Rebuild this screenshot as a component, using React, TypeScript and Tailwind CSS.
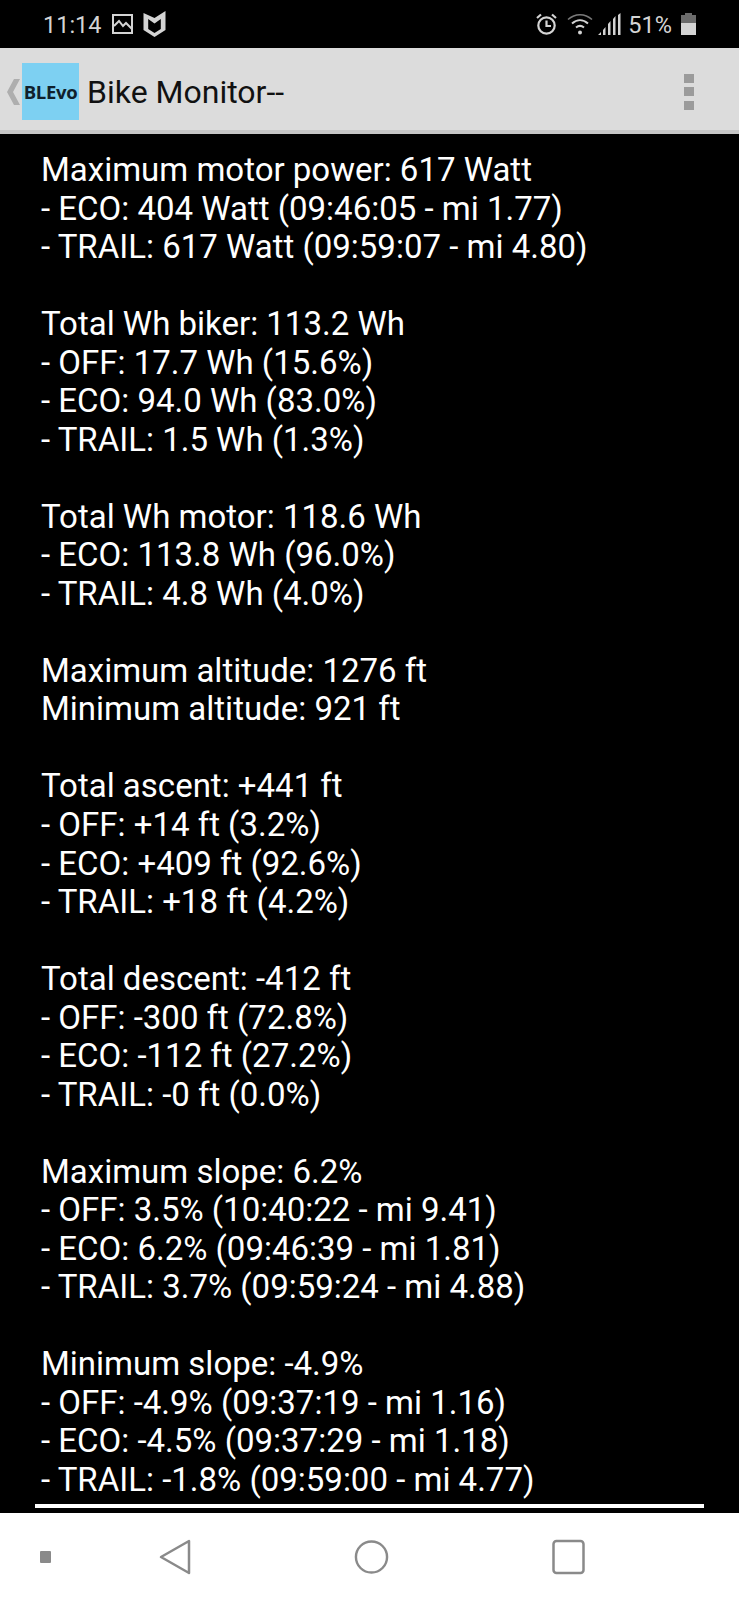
const groups = [
  ["Maximum motor power: 617 Watt", "- ECO: 404 Watt (09:46:05 - mi 1.77)", "- TRAIL: 617 Watt (09:59:07 - mi 4.80)"],
  ["Total Wh biker: 113.2 Wh", "- OFF: 17.7 Wh (15.6%)", "- ECO: 94.0 Wh (83.0%)", "- TRAIL: 1.5 Wh (1.3%)"],
  ["Total Wh motor: 118.6 Wh", "- ECO: 113.8 Wh (96.0%)", "- TRAIL: 4.8 Wh (4.0%)"],
  ["Maximum altitude: 1276 ft", "Minimum altitude: 921 ft"],
  ["Total ascent: +441 ft", "- OFF: +14 ft (3.2%)", "- ECO: +409 ft (92.6%)", "- TRAIL: +18 ft (4.2%)"],
  ["Total descent: -412 ft", "- OFF: -300 ft (72.8%)", "- ECO: -112 ft (27.2%)", "- TRAIL: -0 ft (0.0%)"],
  ["Maximum slope: 6.2%", "- OFF: 3.5% (10:40:22 - mi 9.41)", "- ECO: 6.2% (09:46:39 - mi 1.81)", "- TRAIL: 3.7% (09:59:24 - mi 4.88)"],
  ["Minimum slope: -4.9%", "- OFF: -4.9% (09:37:19 - mi 1.16)", "- ECO: -4.5% (09:37:29 - mi 1.18)", "- TRAIL: -1.8% (09:59:00 - mi 4.77)"],
];

function StatusBar() {
  return (
    <div className="h-[48px] bg-black flex items-center pl-[43px] pr-[43px] text-[#d4d4d4] text-[23.500px] shrink-0">
      <span className="mt-[3px]">11:14</span>
      <svg width="21" height="20" viewBox="0 0 21 20" className="ml-[10px]" fill="none" stroke="#d4d4d4" strokeWidth="2">
        <rect x="1" y="1" width="19" height="18" />
        <path d="M2 12l5-5 4 5 3-3 6 6" />
      </svg>
      <svg width="23" height="26" viewBox="0 0 22 26" className="ml-[10px]" fill="#d4d4d4">
        <path fillRule="evenodd" d="M0 2l11 5 11-7v19l-11 7-11-7zM4.700 8v10l6.300 4 6.300-4v-10l-6.300 4.500z" />
      </svg>
      <div className="flex-1" />
      <svg width="21" height="22" viewBox="0 0 21 22" fill="none" stroke="#d4d4d4" strokeWidth="2.200">
        <circle cx="10.500" cy="12.500" r="8.200" />
        <path d="M10.500 7.500v5.500h4.500M1 5l4-3.500M20 5l-4-3.500" />
      </svg>
      <svg width="26" height="22" viewBox="0 0 26 22" className="ml-[10px]" fill="none" stroke="#7a7a7a" strokeWidth="1.500">
        <path d="M1 6.500c7-6.500 17-6.500 24 0" />
        <path d="M5 10.500c5-4.500 11-4.500 16 0" stroke="#d4d4d4" strokeWidth="2" />
        <path d="M9 14.500c2.500-2 5.500-2 8 0" stroke="#d4d4d4" strokeWidth="2" />
        <circle cx="13" cy="19.500" r="2" fill="#d4d4d4" stroke="none" />
      </svg>
      <svg width="23" height="22" viewBox="0 0 23 22" className="ml-[5px]" fill="#d4d4d4">
        <path d="M0 22l3-3v3zM5 22v-5l2.500-3v8zM10 22v-11l2.500-3v14zM15 22v-16l2.500-3v19zM20 22v-20l2.500-2v22z" />
      </svg>
      <span className="ml-[7px] mt-[3px]">51%</span>
      <div className="ml-[9px] w-[15px] h-[22px] flex flex-col items-center">
        <div className="w-[7px] h-[2px] bg-[#6b6b6b]" />
        <div className="w-[15px] h-[8px] bg-[#6b6b6b]" />
        <div className="w-[15px] h-[12px] bg-[#d4d4d4]" />
      </div>
    </div>
  );
}

function ActionBar() {
  return (
    <div className="h-[86px] bg-[#dcdcdc] border-b-[4px] border-[#c6c6c6] pt-[5px] flex items-center shrink-0">
      <svg width="13" height="26" viewBox="0 0 13 26" className="ml-[7px]" fill="#aeaeae">
        <path d="M13 0h-6l-7 13 7 13h6l-7-13z" />
      </svg>
      <div className="ml-[2px] w-[57px] h-[57px] bg-[#7dd0f2] flex items-center justify-center text-[18.500px] font-bold text-[#10202c] font-['Open_Sans',sans-serif] tracking-[-0.3px]">
        BLEvo
      </div>
      <span className="ml-[8px] text-[32px] text-[#111]">Bike Monitor--</span>
      <div className="flex-1" />
      <div className="mr-[45px] flex flex-col gap-[4.500px]">
        <div className="w-[10px] h-[9px] bg-[#9b9b9b]" />
        <div className="w-[10px] h-[9px] bg-[#9b9b9b]" />
        <div className="w-[10px] h-[9px] bg-[#9b9b9b]" />
      </div>
    </div>
  );
}

function NavBar() {
  return (
    <div className="flex-1 bg-white flex items-center pl-[40px]">
      <div className="w-[11px] h-[12px] rounded-[1px] bg-[#8a8a8a]" />
      <svg width="32" height="36" viewBox="0 0 32 36" fill="none" stroke="#8a8a8a" strokeWidth="2.500" className="ml-[108px]" strokeLinejoin="round">
        <path d="M30 2v32L2 18z" />
      </svg>
      <svg width="35" height="36" viewBox="0 0 36 36" fill="none" stroke="#8a8a8a" strokeWidth="2.500" className="ml-[163px]">
        <circle cx="18" cy="18" r="16" />
      </svg>
      <svg width="35" height="36" viewBox="0 0 34 36" fill="none" stroke="#8a8a8a" strokeWidth="2.500" className="ml-[162px]">
        <rect x="2" y="2" width="30" height="32" rx="3" />
      </svg>
    </div>
  );
}

export default function App() {
  return (
    <div className="w-[739px] h-[1600px] flex flex-col bg-black font-['Roboto',sans-serif] overflow-hidden">
      <StatusBar />
      <ActionBar />
      <div className="flex-1 px-[35px] pt-[17px] flex flex-col min-h-0">
        <div className="flex-1 px-[6px] text-[33px] leading-[38.530px] text-white overflow-hidden whitespace-nowrap">
          {groups.map((g, i) => (
            <div key={i} className="mb-[38.530px]">
              {g.map((line) => (
                <div key={line}>{line}</div>
              ))}
            </div>
          ))}
        </div>
        <div className="h-[4px] bg-white mb-[5px]" />
      </div>
      <div className="h-[87px] flex shrink-0">
        <NavBar />
      </div>
    </div>
  );
}
